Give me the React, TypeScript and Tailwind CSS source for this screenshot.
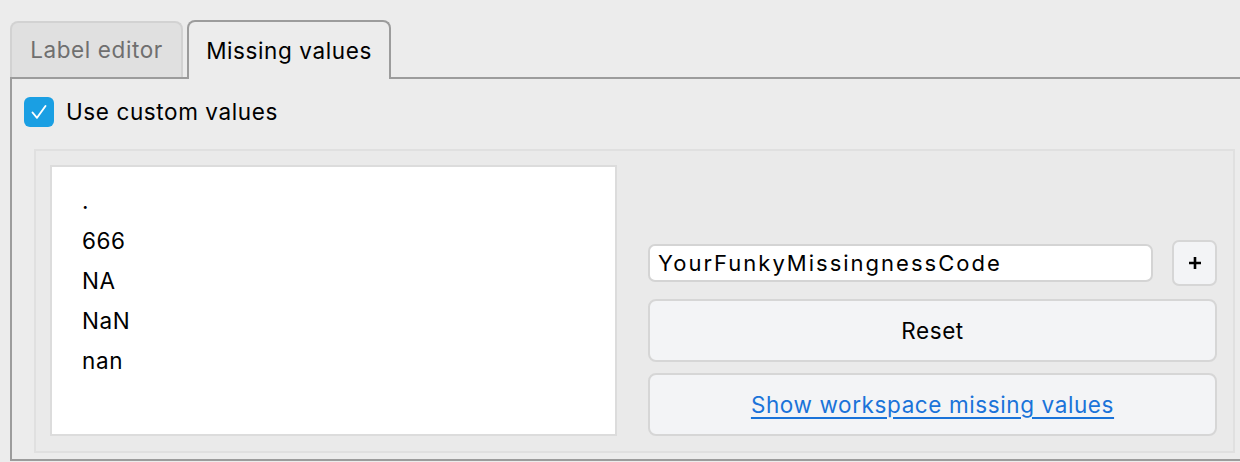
import { useState } from 'react';

const values = ['.', '666', 'NA', 'NaN', 'nan'];

export default function App() {
  const [checked, setChecked] = useState(true);
  const [code, setCode] = useState('YourFunkyMissingnessCode');

  return (
    <div className="w-[1240px] h-[462px] overflow-hidden bg-[#ececec] pl-[10px] pt-[20px] font-['Inter',sans-serif] text-[22.5px] tracking-[0.6px] text-black">
      <div className="flex items-end gap-[4px]">
        <div className="w-[173px] h-[56px] flex items-center justify-center rounded-t-[8px] border-2 border-b-0 border-[#d2d2d2] bg-[#e0e0e0] text-[#6f6f6f]">
          Label editor
        </div>
        <div className="relative z-10 -mb-[2px] w-[204px] h-[59px] flex items-center justify-center rounded-t-[8px] border-2 border-b-0 border-[#9c9c9c] bg-[#ececec]">
          Missing values
        </div>
      </div>
      <div className="w-[1250px] h-[384px] border-2 border-[#9c9c9c]">
        <label className="flex items-center gap-[12px] pl-[12px] pt-[18px] h-[30px] box-content">
          <span
            onClick={() => setChecked(!checked)}
            className="w-[30px] h-[30px] rounded-[6px] bg-[#1a9fe3] flex items-center justify-center"
          >
            {checked && (
              <svg width="20" height="20" viewBox="0 0 20 20" fill="none">
                <path d="M3.5 10.5 L8 15.8 L16.5 4" stroke="white" strokeWidth="1.9" strokeLinecap="round" strokeLinejoin="round" />
              </svg>
            )}
          </span>
          <span>Use custom values</span>
        </label>
        <div className="ml-[22px] mt-[22px] w-[1201px] h-[304px] border-2 border-[#e0e0e0] bg-[#eaeaea] flex pl-[14px] pt-[14px] pr-[16px] gap-[31px]">
          <div className="shrink-0 w-[567px] h-[271px] border-2 border-[#dcdcdc] bg-white pl-[30px] pt-[14px]">
            {values.map(v => (
              <div key={v} className="h-[40px] leading-[40px]">{v}</div>
            ))}
          </div>
          <div className="flex-1 min-w-0 h-[271px] flex flex-col justify-end">
            <div className="flex items-center gap-[19px]">
              <input
                value={code}
                onChange={e => setCode(e.target.value)}
                className="w-[505px] h-[38px] rounded-[7px] border-2 border-[#d4d4d4] bg-white pl-[8px] text-[22px] tracking-[2px] outline-none"
              />
              <button className="w-[45px] h-[46px] rounded-[7px] border-2 border-[#d6d6d6] bg-[#f3f4f6] flex items-center justify-center">
                <svg width="16" height="16" viewBox="0 0 16 16">
                  <path d="M8 2v12M2 8h12" stroke="black" strokeWidth="2.6" />
                </svg>
              </button>
            </div>
            <button className="mt-[13px] h-[63px] rounded-[8px] border-2 border-[#d6d6d6] bg-[#f3f4f6]">Reset</button>
            <button className="mt-[11px] h-[63px] rounded-[8px] border-2 border-[#d6d6d6] bg-[#f3f4f6] text-[#1a73d9] underline underline-offset-[4px]">
              Show workspace missing values
            </button>
          </div>
        </div>
      </div>
    </div>
  );
}
